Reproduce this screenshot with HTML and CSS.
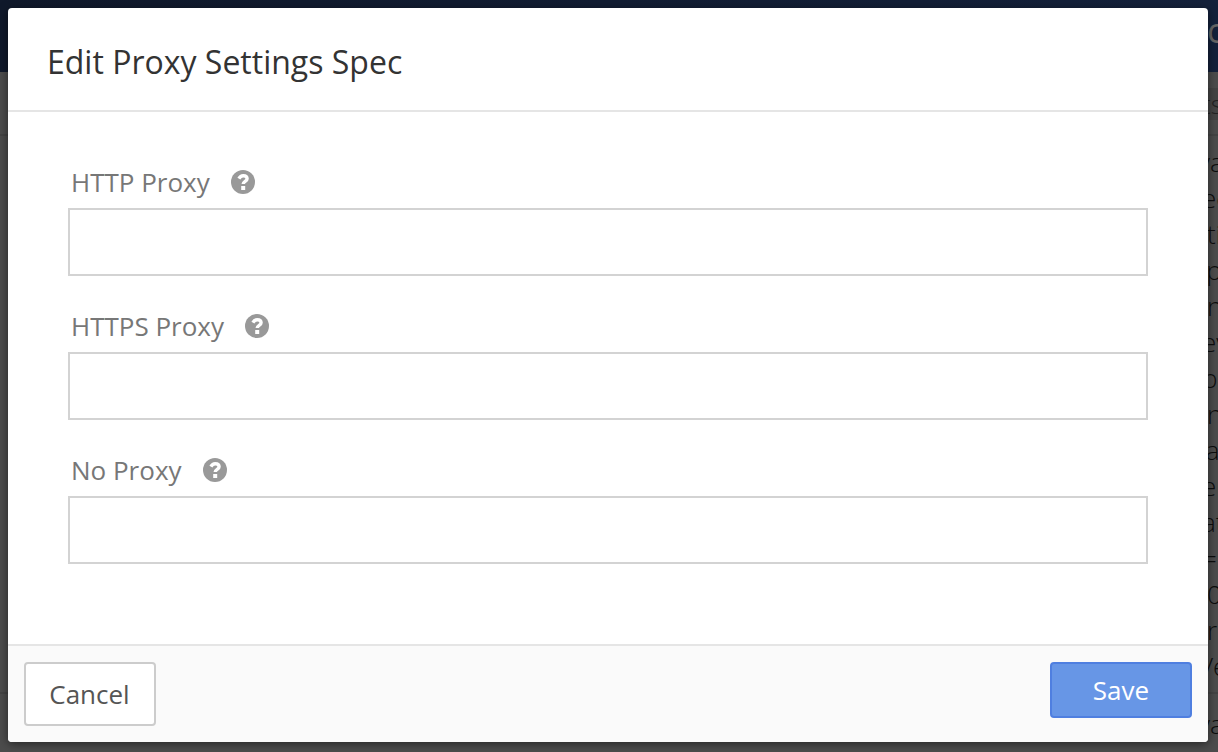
FILE: index.html
```
<!DOCTYPE html>
<html lang="en">
<head>
<meta charset="utf-8">
<title>Edit Proxy Settings Spec</title>
<link rel="stylesheet" href="styles.css">
</head>
<body>
<svg class="sprite" aria-hidden="true">
  <symbol id="help" viewBox="0 0 24 24">
    <circle cx="12" cy="12" r="12" fill="#999"/>
    <path d="M7.9 8.6C8.9 6.7 10.2 5.7 12.2 5.7c2.3 0 3.9 1.2 3.9 3 0 2.7-3.9 2.6-3.9 5.3" fill="none" stroke="#fff" stroke-width="3.4"/>
    <path d="M10.2 16h4v4h-4z" fill="#fff"/>
  </symbol>
</svg>
<div class="page" aria-hidden="true">
  <div class="topbar">c</div>
  <div class="tabs"><div class="tab">ts</div></div>
  <div class="spec">
    <div class="line">va</div>
    <div class="line mid">ec</div>
    <div class="line far">ti</div>
    <div class="line">-p</div>
    <div class="line far">n</div>
    <div class="line mid">ev</div>
    <div class="line mid">p</div>
    <div class="line far">n</div>
    <div class="line">fa</div>
    <div class="line mid">er</div>
    <div class="line mid">at</div>
    <div class="line mid">=</div>
    <div class="line far">0</div>
    <div class="line far">r</div>
    <div class="line">Ve</div>
  </div>
  <div class="spec last"><div class="line">va</div></div>
</div>
<form class="modal" role="dialog" aria-labelledby="title">
  <header class="head"><h1 id="title">Edit Proxy Settings Spec</h1></header>
  <div class="body">
    <div class="field">
      <div class="caption"><label for="http">HTTP Proxy</label><svg class="help"><use href="#help"/></svg></div>
      <input id="http" type="text">
    </div>
    <div class="field">
      <div class="caption"><label for="https">HTTPS Proxy</label><svg class="help"><use href="#help"/></svg></div>
      <input id="https" type="text">
    </div>
    <div class="field">
      <div class="caption"><label for="none">No Proxy</label><svg class="help"><use href="#help"/></svg></div>
      <input id="none" type="text">
    </div>
  </div>
  <footer class="foot">
    <button class="cancel" type="button">Cancel</button>
    <button class="save" type="submit">Save</button>
  </footer>
</form>
</body>
</html>
```
FILE: styles.css
```
* { box-sizing: border-box; }
body {
  margin: 0;
  min-height: 100vh;
  display: flex;
  padding: 8px 10px 10px 8px;
  background: #4c4c4c;
  font-family: "Open Sans", "Noto Sans", sans-serif;
}
.sprite { position: absolute; width: 0; height: 0; }

/* dimmed page under the dialog */
.page {
  position: absolute;
  inset: 0;
  overflow: hidden;
  white-space: nowrap;
  color: #0c0c0c;
  font-size: 26px;
  font-weight: 300;
  line-height: 36px;
}
.topbar {
  height: 72px;
  padding-top: 12px;
  background: linear-gradient(90deg, #10192b, #14213b);
  color: #666;
  font-size: 34px;
  font-weight: 400;
}
.topbar, .line { display: flex; }
.topbar::before, .line::before {
  content: "";
  flex: none;
  width: calc(100% - 20px);
}
.topbar::before, .far::before { width: calc(100% - 11px); }
.mid::before { width: calc(100% - 16px); }
.tabs {
  display: flex;
  justify-content: flex-end;
  height: 64px;
  padding-top: 16px;
  border-bottom: 2px solid #444;
}
.tab {
  width: 16px;
  height: 32px;
  line-height: 32px;
  background: #444;
  color: #222;
}
.spec { padding: 8px 0; border-bottom: 2px solid #444; }
.last { padding-top: 12px; border: 0; }

.modal {
  position: relative;
  flex: 1;
  display: flex;
  flex-direction: column;
  overflow: hidden;
  border-radius: 4px;
  background: #fff;
  box-shadow: 0 2px 10px rgba(0, 0, 0, .5);
}
.head { padding: 30px 39px 24px; border-bottom: 2px solid #e5e5e5; }
h1 {
  margin: 0;
  color: #333;
  font-size: 32px;
  font-weight: 400;
  line-height: 48px;
}
.body {
  flex: 1;
  display: flex;
  flex-direction: column;
  gap: 32px;
  padding: 52px 60px 80px;
}
.caption {
  display: flex;
  align-items: center;
  gap: 21px;
  height: 36px;
  margin-bottom: 8px;
  padding-left: 3px;
  color: #777;
  font-size: 26px;
  line-height: 36px;
}
.help { width: 24px; height: 24px; }
.field { display: flex; flex-direction: column; }
.field input {
  height: 68px;
  padding: 0 16px;
  border: 2px solid #d3d3d3;
  background: #fff;
  color: #333;
  font: 26px "Open Sans", sans-serif;
}
.foot {
  display: flex;
  justify-content: space-between;
  align-items: flex-start;
  padding: 16px;
  border-top: 2px solid #e5e5e5;
  background: #fafafa;
}
button {
  border: 2px solid #ccc;
  border-radius: 4px;
  font: 26px "Open Sans", sans-serif;
}
.cancel { height: 64px; padding: 0 24px 0 23px; min-width: 132px; background: #fff; color: #555; }
.save {
  height: 56px;
  min-width: 142px;
  padding: 0 40px;
  border-color: #4f7fe0;
  background: #6796e6;
  color: #fff;
}
```
